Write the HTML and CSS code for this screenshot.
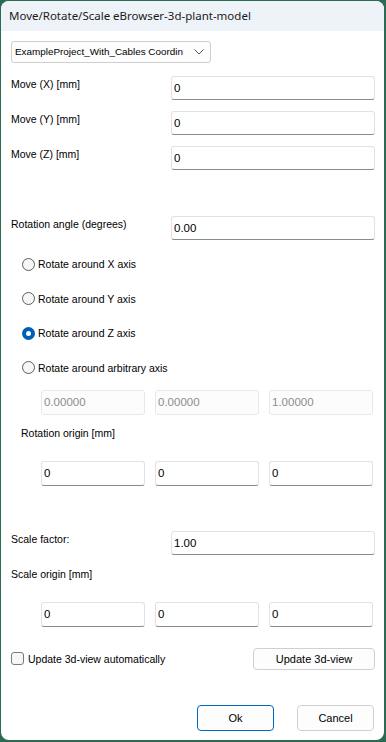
FILE: index.html
```html
<!DOCTYPE html>
<html lang="en">
<head>
  <meta charset="UTF-8">
  <title>Move/Rotate/Scale eBrowser-3d-plant-model</title>
  <link rel="stylesheet" href="styles.css">
</head>
<body>
  <div class="window">
    <!-- title bar -->
    <div class="titlebar">Move/Rotate/Scale eBrowser-3d-plant-model</div>

    <div class="content">
      <div class="combo">
        <span class="combo-text">ExampleProject_With_Cables Coordin</span>
        <svg class="chevron" width="10" height="6" viewBox="0 0 10 6"><path d="M0.5 0.5 L5 5 L9.5 0.5" fill="none" stroke="#555" stroke-width="1"/></svg>
      </div>

      <!-- move -->
      <div class="field-row first">
        <label>Move (X) [mm]</label>
        <div class="textbox">0</div>
      </div>
      <div class="field-row">
        <label>Move (Y) [mm]</label>
        <div class="textbox">0</div>
      </div>
      <div class="field-row">
        <label>Move (Z) [mm]</label>
        <div class="textbox">0</div>
      </div>

      <!-- rotation -->
      <div class="field-row rotation">
        <label>Rotation angle (degrees)</label>
        <div class="textbox">0.00</div>
      </div>

      <div class="radios">
        <div class="radio-row"><span class="radio"></span>Rotate around X axis</div>
        <div class="radio-row"><span class="radio"></span>Rotate around Y axis</div>
        <div class="radio-row"><span class="radio checked"></span>Rotate around Z axis</div>
        <div class="radio-row"><span class="radio"></span>Rotate around arbitrary axis</div>
      </div>

      <div class="triple axis">
        <div class="textbox disabled">0.00000</div>
        <div class="textbox disabled">0.00000</div>
        <div class="textbox disabled">1.00000</div>
      </div>

      <div class="sub-label">Rotation origin [mm]</div>
      <div class="triple origin">
        <div class="textbox">0</div>
        <div class="textbox">0</div>
        <div class="textbox">0</div>
      </div>

      <!-- scale -->
      <div class="field-row scale">
        <label>Scale factor:</label>
        <div class="textbox">1.00</div>
      </div>
      <div class="plain-label">Scale origin [mm]</div>
      <div class="triple origin">
        <div class="textbox">0</div>
        <div class="textbox">0</div>
        <div class="textbox">0</div>
      </div>

      <div class="update-row">
        <div class="check-label"><span class="checkbox"></span>Update 3d-view automatically</div>
        <button class="btn update">Update 3d-view</button>
      </div>

      <div class="dialog-buttons">
        <button class="btn ok">Ok</button>
        <button class="btn">Cancel</button>
      </div>
    </div>
  </div>
</body>
</html>
```

FILE: styles.css
```css
* {
  box-sizing: border-box;
  margin: 0;
  padding: 0;
}

html, body {
  width: 100%;
  height: 100%;
  background: #2b6a53; /* desktop behind the dialog */
  overflow: hidden;
}

body {
  font-family: "Liberation Sans", Arial, sans-serif;
  font-size: 10.5px;
  color: #000;
}

/* ======= dialog frame ======= */
.window {
  margin: 1px 0 0 1px;
  width: 383px;
  height: 739px;
  background: #fff;
  border-radius: 8px;
  overflow: hidden;
}

.titlebar {
  height: 30px;
  background: #eef3f9;
  padding: 7px 0 0 8px;
  font-family: "Noto Sans", "Liberation Sans", sans-serif;
  font-size: 11.5px;
  line-height: 16px;
  color: #1a1a1a;
}

.content {
  padding: 10px 0 0 10px;
}

/* ======= combo box ======= */
.combo {
  width: 200px;
  height: 22px;
  border: 1px solid #cfcfcf;
  border-radius: 3px;
  background: #fdfdfd;
  display: flex;
  align-items: center;
  padding: 0 0 0 3px;
  position: relative;
}
.combo-text {
  line-height: 14px;
  font-size: 9.9px;
  white-space: nowrap;
}
.chevron {
  position: absolute;
  right: 6px;
  top: 7px;
}

/* ======= label + textbox rows ======= */
.field-row {
  display: grid;
  grid-template-columns: 160px 204px;
  height: 24px;
  margin-top: 11px;
}
.field-row.first {
  margin-top: 13px;
}
.field-row.rotation {
  margin-top: 46px;
}
.field-row.scale {
  margin-top: 45px;
}
.field-row label {
  padding-top: 1px;
  line-height: 14px;
}

.textbox {
  height: 24px;
  border: 1px solid #e2e2e2;
  border-bottom-color: #8a8a8a;
  border-radius: 3px;
  background: #fff;
  padding: 4px 0 0 2px;
  line-height: 14px;
  font-size: 11.5px;
}
.textbox.disabled {
  background: #fcfcfc;
  border-color: #e8e8e8;
  color: #8c8c8c;
}

/* ======= radio buttons ======= */
.radios {
  margin-top: 14px;
  padding-left: 11px;
}
.radio-row {
  height: 20px;
  display: flex;
  align-items: center;
  margin-bottom: 14.5px;
}
.radio-row:last-child {
  margin-bottom: 0;
}
.radio {
  width: 13px;
  height: 13px;
  border: 1px solid #5c5c5c;
  border-radius: 50%;
  background: #f6f6f6;
  margin-right: 3px;
  flex-shrink: 0;
}
.radio.checked {
  border: 4px solid #005fb8;
  background: #fff;
}

/* ======= three textboxes ======= */
.triple {
  display: grid;
  grid-template-columns: 104px 104px 104px;
  column-gap: 10px;
  padding-left: 30px;
}
.triple .textbox {
  height: 25px;
}
.triple.axis {
  margin-top: 12px;
}
.triple.origin {
  margin-top: 21px;
}

.sub-label {
  margin-top: 11px;
  padding-left: 10px;
  line-height: 14px;
}
.plain-label {
  margin-top: 12px;
  line-height: 14px;
}

/* ======= bottom area ======= */
.update-row {
  margin-top: 21px;
  width: 364px;
  height: 22px;
  display: flex;
  justify-content: space-between;
  align-items: center;
}
.check-label {
  display: flex;
  align-items: center;
}
.checkbox {
  width: 13px;
  height: 13px;
  border: 1px solid #7a7a7a;
  border-radius: 3px;
  background: #f7f7f7;
  margin-right: 4px;
}

.btn {
  font-family: "Liberation Sans", Arial, sans-serif;
  font-size: 11px;
  color: #000;
  background: #fdfdfd;
  border: 1px solid #d0d0d0;
  border-radius: 4px;
  height: 22px;
}
.btn.update {
  width: 122px;
}

.dialog-buttons {
  margin-top: 35px;
  width: 363px;
  display: flex;
  justify-content: flex-end;
  gap: 23px;
}
.dialog-buttons .btn {
  width: 77px;
  height: 26px;
}
.btn.ok {
  border-color: #0067c0;
}
```
